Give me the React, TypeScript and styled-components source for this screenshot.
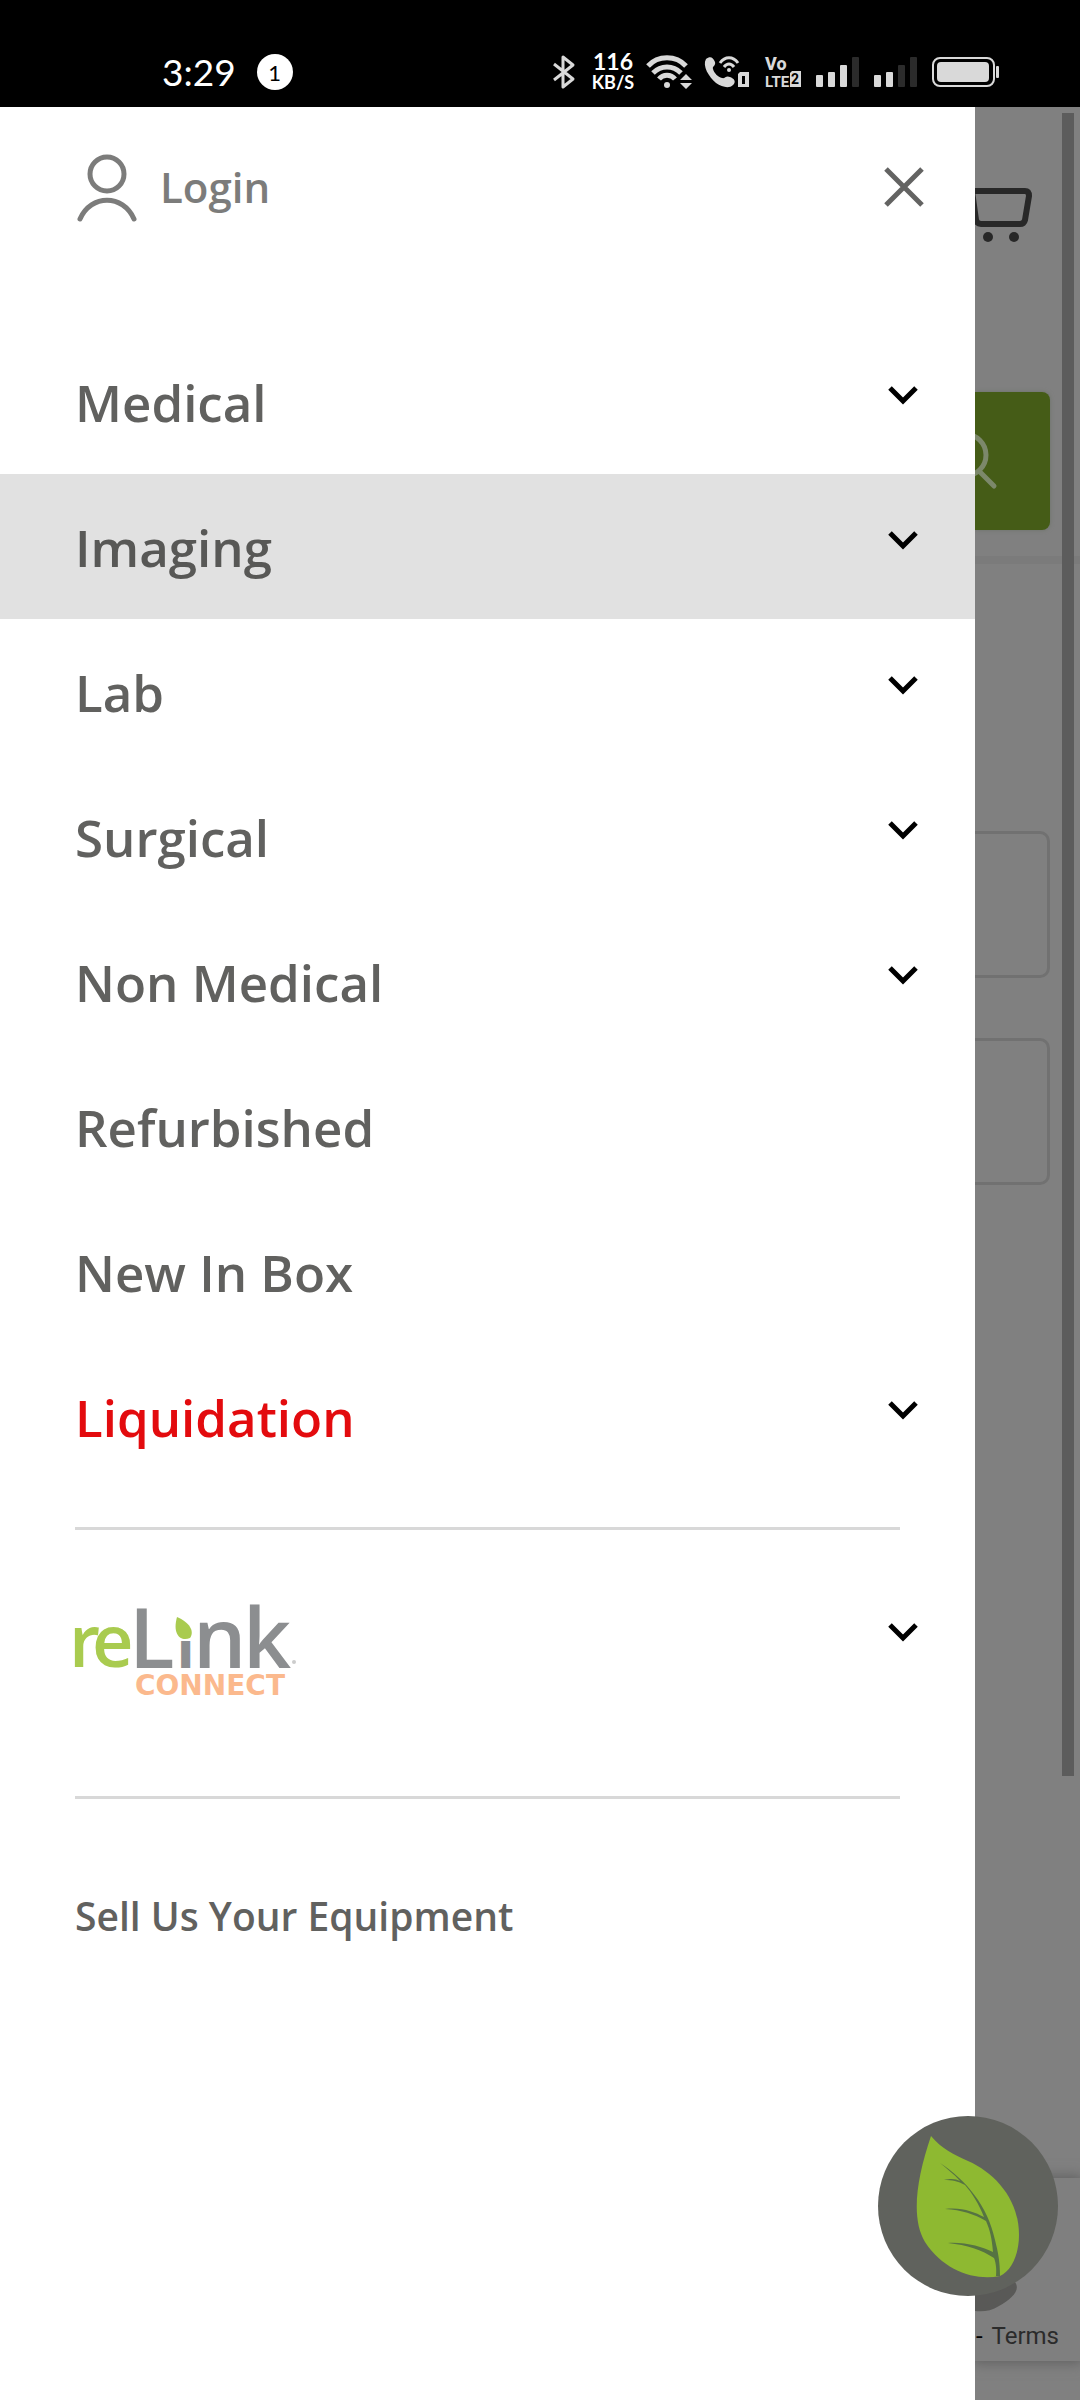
import { useState } from "react";
import styled, { createGlobalStyle } from "styled-components";

const GlobalStyle = createGlobalStyle`
  * {
    box-sizing: border-box;
  }

  body {
    margin: 0;
    background: #808080;
    font-family: "Open Sans", "Noto Sans", sans-serif;
  }

  button {
    padding: 0;
    border: none;
    background: none;
    font: inherit;
    cursor: pointer;
  }

  a {
    color: inherit;
    text-decoration: none;
  }

  svg {
    display: block;
    flex: none;
    overflow: visible;
  }
`;

const Screen = styled.div`
  display: flex;
  flex-direction: column;
  min-height: 100vh;
`;

const StatusBar = styled.header`
  display: flex;
  align-items: center;
  justify-content: space-between;
  height: 107px;
  padding: 37px 80px 0 162px;
  background: #000;
  color: #fff;
`;

const StatusGroup = styled.div<{ $gap: number }>`
  display: flex;
  align-items: center;
  gap: ${({ $gap }) => $gap}px;
`;

const Clock = styled.time`
  font: 400 37px/38px Lato, sans-serif;
`;

const Count = styled.span`
  width: 36px;
  height: 36px;
  border-radius: 50%;
  background: #fff;
  color: #000;
  font: 400 22px/38px Lato, sans-serif;
  text-align: center;
`;

const Speed = styled.div`
  display: flex;
  flex-direction: column;
  align-items: center;
  width: 42px;
  font: 700 23px/21px Lato, sans-serif;

  small {
    font-size: 18px;
  }
`;

const Body = styled.main`
  position: relative;
  flex: 1;
  display: grid;
  grid-template-columns: minmax(0, 1fr) 105px;
`;

const Drawer = styled.aside`
  background: #fff;
  color: #61615f;
`;

const DrawerHeader = styled.div`
  display: flex;
  align-items: center;
  justify-content: space-between;
  height: 160px;
  margin-bottom: 62px;
  padding: 0 51px 0 75px;
`;

const LoginLink = styled.a`
  display: flex;
  align-items: center;
  gap: 25px;
  color: #7c7c7b;
  font-size: 42px;
  line-height: 56px;
  font-weight: 600;
`;

const Menu = styled.ul`
  margin: 0;
  padding: 0;
  list-style: none;
`;

const MenuRow = styled.li<{ $active?: boolean; $sale?: boolean }>`
  display: flex;
  align-items: center;
  justify-content: space-between;
  height: 145px;
  padding: 0 51px 0 75px;
  background: ${({ $active }) => ($active ? "#e1e1e1" : "transparent")};
  color: ${({ $sale, $active }) => ($sale ? "#e30b0e" : $active ? "#585856" : "inherit")};
  font-size: 51px;
  line-height: 68px;
  font-weight: 600;
`;

const Toggle = styled.button`
  display: flex;
  justify-content: center;
  width: 42px;
  padding-bottom: 12px;
`;

const Divider = styled.hr`
  height: 3px;
  margin: 38px 75px 0;
  border: none;
  background: #d8d8d8;
`;

const BrandRow = styled.div`
  display: flex;
  align-items: flex-start;
  justify-content: space-between;
  height: 228px;
  padding: 75px 51px 0 75px;

  ${Toggle} {
    padding-top: 18px;
  }
`;

const SellLink = styled.a`
  display: block;
  padding: 90px 75px;
  font-size: 39px;
  line-height: 54px;
  font-weight: 600;
`;

const Backdrop = styled.section`
  display: flex;
  flex-direction: column;
  overflow: hidden;
  background: #808080;
`;

const ShopHeader = styled.div`
  height: 457px;
  padding: 78px 30px 0 0;
  border-bottom: 8px solid #7b7b7b;
`;

const SearchButton = styled.button`
  display: block;
  width: 100%;
  height: 138px;
  margin-top: 147px;
  border-radius: 0 8px 8px 0;
  background: #455c17;
  box-shadow: 0 0 4px #6c7268;
`;

const Fields = styled.div`
  display: flex;
  flex-direction: column;
  gap: 60px;
  flex: 1;
  padding: 267px 30px 0 0;
`;

const Field = styled.input`
  width: 100%;
  height: 147px;
  border: 3px solid #717171;
  border-left: none;
  border-radius: 0 10px 10px 0;
  background: transparent;
`;

const Badge = styled.div`
  display: flex;
  flex-direction: column;
  justify-content: flex-end;
  gap: 10px;
  height: 183px;
  margin-bottom: 39px;
  padding-bottom: 12px;
  background: #7f7f7f;
  box-shadow: 0 0 12px 2px #606060;
`;

const Legal = styled.div`
  display: flex;
  justify-content: space-between;
  padding: 0 21px 0 1px;
  color: #000;
  font: 400 24px/26px Roboto, sans-serif;

  a {
    color: #2b2b2b;
  }
`;

const ScrollThumb = styled.div`
  position: absolute;
  top: 6px;
  right: 6px;
  width: 12px;
  height: 1663px;
  background: #5c5c5c;
`;

const LeafButton = styled.button`
  position: absolute;
  right: 22px;
  bottom: 104px;
  width: 180px;
  height: 180px;
  border-radius: 50%;
  background: #60625d;
`;

const Signal = ({ level }: { level: number }) => (
  <svg width="43" height="30" viewBox="0 0 43 30">
    {[12, 15, 22, 30].map((h, i) => (
      <rect key={h} x={i * 12} y={30 - h} width="7" height={h} rx="1" fill={i < level ? "#d9d9d9" : "#2b2b2b"} />
    ))}
  </svg>
);

const StatusIcons = () => (
  <StatusGroup $gap={15}>
    <svg width="22" height="34" viewBox="0 0 22 34" fill="none" stroke="#d9d9d9" strokeWidth="3">
      <path d="M-1 9l19 15-10 8V2l10 8L-1 25" strokeLinejoin="round" />
    </svg>
    <StatusGroup $gap={12}>
      <Speed>
        <span>116</span>
        <small>KB/S</small>
      </Speed>
      <svg width="46" height="36" viewBox="0 0 46 36" fill="none" stroke="#d9d9d9" strokeWidth="5">
        <path d="M2 12c10-11 28-11 38 0M7 19c8-8 20-8 28 0M13 25c4-5 12-5 16 0" />
        <circle cx="21" cy="31" r="3" fill="#d9d9d9" stroke="none" />
        <path d="M34 26l6-6 6 6zM34 29h12l-6 6z" fill="#d9d9d9" stroke="none" />
      </svg>
      <svg width="46" height="34" viewBox="0 0 46 34" fill="none" stroke="#d9d9d9">
        <path
          d="M2 4c4-3 7-2 9 3 1 4-3 4-2 7 1 4 5 8 9 9 3 1 4-3 8-1 5 2 6 5 3 8-4 4-11 2-17-2C5 22-2 11 2 4z"
          fill="#d9d9d9"
          stroke="none"
        />
        <path d="M16 8c5-7 13-7 18 0M20 12c3-4 7-4 10 0" strokeWidth="3" />
        <circle cx="25" cy="15" r="2" fill="#d9d9d9" stroke="none" />
        <path d="M36 17h9v15H34V19z" fill="#d9d9d9" stroke="none" />
        <path d="M38 21h3v8h-3z" fill="#000" stroke="none" />
      </svg>
    </StatusGroup>
    <svg width="36" height="34" viewBox="0 0 36 34" fill="#d9d9d9" fontFamily="Roboto" fontWeight="800">
      <text x="0" y="15" fontSize="18">Vo</text>
      <text x="0" y="32" fontSize="15" fontWeight="700">LTE</text>
      <path d="M27 16h9v16H25V18z" />
      <text x="26" y="29" fontSize="14" fontWeight="700" fill="#000">2</text>
    </svg>
    <Signal level={3} />
    <Signal level={2} />
    <svg width="68" height="30" viewBox="0 0 68 30">
      <rect x="1" y="1" width="61" height="28" rx="7" fill="none" stroke="#d9d9d9" strokeWidth="2" />
      <rect x="5" y="5" width="52" height="20" rx="4" fill="#d9d9d9" />
      <rect x="64" y="9" width="3" height="12" rx="1" fill="#d9d9d9" />
    </svg>
  </StatusGroup>
);

const UserIcon = () => (
  <svg width="60" height="72" viewBox="0 0 60 72" fill="none" stroke="#7c7c7b" strokeWidth="5" strokeLinecap="round">
    <circle cx="32" cy="23" r="17" />
    <path d="M5 68c11-25 43-25 54 0" />
  </svg>
);

const CloseIcon = () => (
  <svg width="40" height="40" viewBox="0 0 40 40" stroke="#636362" strokeWidth="5">
    <path d="M2 2l36 36M38 2L2 38" />
  </svg>
);

const Chevron = () => (
  <svg width="30" height="20" viewBox="0 0 30 20" fill="none" stroke="#000" strokeWidth="5">
    <path d="M2 2l13 13L28 2" />
  </svg>
);

const BrandLogo = () => (
  <svg width="222" height="90" viewBox="0 0 222 90" fontFamily="Open Sans, sans-serif" role="img" aria-label="reLink Connect">
    <g fill="#a9cb4f" fontSize="72" fontWeight="600">
      <text y="62">
        <tspan x="-6">r</tspan>
        <tspan x="17">e</tspan>
      </text>
      <path d="M102 12c12 5 18 14 13 21-9 4-18-3-13-21z" />
    </g>
    <g fill="#8c8e90" fontSize="84" fontWeight="600">
      <text y="63">
        <tspan x="54">L</tspan>
        <tspan x="103" fontSize="47" fontWeight="800">ı</tspan>
        <tspan x="118">n</tspan>
        <tspan x="168">k</tspan>
      </text>
      <circle cx="219" cy="57" r="2" fill="#ccc" />
    </g>
    <text x="60" y="90" fontSize="28" fontFamily="DejaVu Sans" fontWeight="700" fill="#fbb98d">
      CONNECT
    </text>
  </svg>
);

const LeafIcon = () => (
  <svg width="180" height="180" viewBox="0 0 180 180">
    <path
      d="M53 20C64 33 75 38 90 45C117 57 141 83 141 119C141 139 133 155 122 160C97 165 66 155 47 126C33 103 38 64 53 20z"
      fill="#8eb931"
    />
    <path
      d="M62 47C88 64 110 90 117 124C120 136 122 145 122 160L118 160C119 151 117 144 116 142C104 134 89 129 70 127C88 126 104 131 115 136C114 123 112 114 108 105C96 98 84 94 67 93C84 91 96 96 106 101C101 88 94 77 87 69C80 65 74 64 66 64C74 62 78 63 82 65C76 58 69 53 62 47z"
      fill="#567342"
    />
  </svg>
);

const ITEMS = [
  { label: "Medical", expandable: true },
  { label: "Imaging", expandable: true },
  { label: "Lab", expandable: true },
  { label: "Surgical", expandable: true },
  { label: "Non Medical", expandable: true },
  { label: "Refurbished" },
  { label: "New In Box" },
  { label: "Liquidation", expandable: true, sale: true },
];

const App = () => {
  const [active, setActive] = useState("Imaging");

  return (
    <Screen>
      <GlobalStyle />
      <StatusBar>
        <StatusGroup $gap={21}>
          <Clock>3:29</Clock>
          <Count>1</Count>
        </StatusGroup>
        <StatusIcons />
      </StatusBar>

      <Body>
        <Drawer>
          <DrawerHeader>
            <LoginLink href="#login">
              <UserIcon />
              Login
            </LoginLink>
            <button type="button" aria-label="Close menu">
              <CloseIcon />
            </button>
          </DrawerHeader>

          <nav>
            <Menu>
              {ITEMS.map(({ label, expandable, sale }) => (
                <MenuRow key={label} $active={label === active} $sale={sale}>
                  <a href="#category">{label}</a>
                  {expandable && (
                    <Toggle type="button" aria-label={`Expand ${label}`} onClick={() => setActive(label)}>
                      <Chevron />
                    </Toggle>
                  )}
                </MenuRow>
              ))}
            </Menu>
            <Divider />
            <BrandRow>
              <a href="#connect">
                <BrandLogo />
              </a>
              <Toggle type="button" aria-label="Expand reLink Connect">
                <Chevron />
              </Toggle>
            </BrandRow>
            <Divider />
            <SellLink href="#sell">Sell Us Your Equipment</SellLink>
          </nav>
        </Drawer>

        {/* Page behind the open drawer */}
        <Backdrop>
          <ShopHeader>
            <svg width="60" height="60" viewBox="0 0 60 60" fill="none" stroke="#282828" strokeWidth="6">
              <path d="M-4 6h54q4 0 4 5l-4 24q-1 4-5 4H6q-4 0-5-4L-3 6" />
              <circle cx="13" cy="52" r="5" fill="#282828" stroke="none" />
              <circle cx="39" cy="52" r="5" fill="#282828" stroke="none" />
            </svg>
            <SearchButton type="button" aria-label="Search">
              <svg width="30" height="60" viewBox="0 0 30 60" fill="none" stroke="#7c886b" strokeWidth="5">
                <circle cx="-10" cy="24" r="21" />
                <path d="M4 40l15 15" strokeLinecap="round" />
              </svg>
            </SearchButton>
          </ShopHeader>
          <Fields>
            <Field aria-label="Email" />
            <Field aria-label="Password" type="password" />
          </Fields>
          <Badge>
            <svg width="45" height="32" viewBox="0 0 45 32">
              <path d="M0 0h39c8 8-2 18-15 25-8 5-16 6-24 5z" fill="#595957" />
            </svg>
            <Legal>
              <span>-</span>
              <a href="#terms">Terms</a>
            </Legal>
          </Badge>
        </Backdrop>

        <ScrollThumb />
        <LeafButton type="button" aria-label="Open accessibility widget">
          <LeafIcon />
        </LeafButton>
      </Body>
    </Screen>
  );
};

export default App;
